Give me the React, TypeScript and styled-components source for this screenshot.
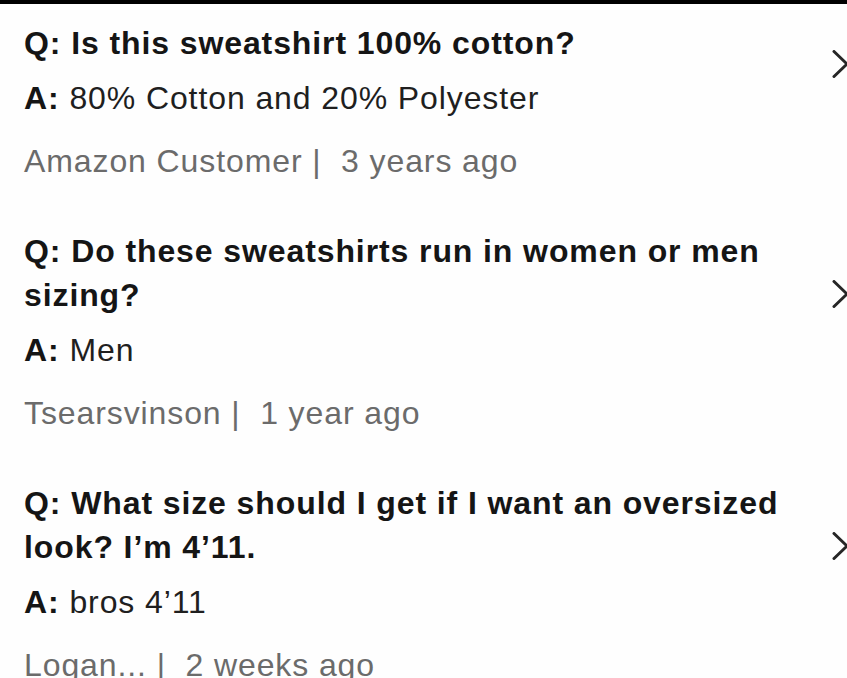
import React from "react";
import styled, { createGlobalStyle } from "styled-components";

const Global = createGlobalStyle`
  html, body { margin: 0; padding: 0; background: #fff; overflow: hidden; }
  body { width: 847px; height: 678px; font-family: "Liberation Sans", Arial, sans-serif; }
`;

const Page = styled.div`
  width: 847px;
  height: 678px;
  overflow: hidden;
  background: #fefefe;
  display: flex;
  flex-direction: column;
`;

const TopBar = styled.div`
  height: 4px;
  background: #000;
  flex: none;
`;

const List = styled.div`
  display: flex;
  flex-direction: column;
  gap: 46px;
  padding: 17px 0 0 24px;
`;

const Item = styled.div`
  display: flex;
  flex-direction: column;
  font-size: 32px;
  line-height: 44px;
  letter-spacing: 0.9px;
`;

const Row = styled.div`
  display: flex;
  align-items: center;
`;

const QA = styled.div`
  flex: 1;
  display: flex;
  flex-direction: column;
  gap: 11px;
  min-width: 0;
`;

const Question = styled.div`
  font-weight: 700;
  color: #151515;
`;

const Answer = styled.div`
  color: #1f1f1f;
  b { font-weight: 700; color: #151515; }
`;

const Meta = styled.div`
  margin-top: 19px;
  color: #6b6b6b;
  white-space: pre;
`;

const Chevron = styled.svg`
  flex: none;
  width: 18px;
  height: 28px;
  margin: 0 -3px 14px 10px;
`;

const Arrow = () => (
  <Chevron viewBox="0 0 18 28">
    <path d="M2 1.5 L15 14 L2 26.5" fill="none" stroke="#262626" strokeWidth="3" strokeLinecap="round" strokeLinejoin="round" />
  </Chevron>
);

const items = [
  { q: "Q: Is this sweatshirt 100% cotton?", a: "80% Cotton and 20% Polyester", m: "Amazon Customer |  3 years ago" },
  { q: "Q: Do these sweatshirts run in women or men sizing?", a: "Men", m: "Tsearsvinson |  1 year ago" },
  { q: "Q: What size should I get if I want an oversized look? I\u2019m 4\u201911.", a: "bros 4\u201911", m: "Logan... |  2 weeks ago" },
];

export default function App() {
  return (
    <Page>
      <Global />
      <TopBar />
      <List>
        {items.map((it) => (
          <Item key={it.q}>
            <Row>
              <QA>
                <Question>{it.q}</Question>
                <Answer>
                  <b>A:</b> {it.a}
                </Answer>
              </QA>
              <Arrow />
            </Row>
            <Meta>{it.m}</Meta>
          </Item>
        ))}
      </List>
    </Page>
  );
}
